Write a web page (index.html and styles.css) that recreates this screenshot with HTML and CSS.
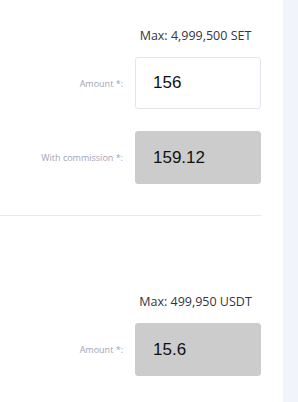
FILE: index.html
```html
<!DOCTYPE html>
<html>
<head>
    <title>Exchange</title>
    <link rel="stylesheet" href="styles.css">
</head>
<body>
    <div class="page">
        <div class="main">
            <div class="section">
                <div class="max-row">
                    <div class="max-text">Max: 4,999,500 SET</div>
                </div>
                <div class="field-row">
                    <label class="field-label">Amount *:</label>
                    <div class="field-box">156</div>
                </div>
                <div class="field-row">
                    <label class="field-label">With commission *:</label>
                    <div class="field-box disabled">159.12</div>
                </div>
            </div>

            <hr class="divider">

            <div class="section second">
                <div class="max-row">
                    <div class="max-text">Max: 499,950 USDT</div>
                </div>
                <div class="field-row">
                    <label class="field-label">Amount *:</label>
                    <div class="field-box disabled">15.6</div>
                </div>
            </div>
        </div>
        <div class="side"></div>
    </div>
</body>
</html>
```

FILE: styles.css
```css
body {
    margin: 0;
    font-family: "Open Sans", "Noto Sans", sans-serif;
    background: #fff;
}

.page {
    display: flex;
    height: 402px;
    overflow: hidden;
}

.main {
    width: 261px;
    padding-right: 22px;
}

.side {
    flex: 1;
    background-color: #f1f4fa;
}

.section {
    padding-top: 28px;
}

.section.second {
    padding-top: 78px;
}

.max-row {
    display: flex;
    justify-content: flex-end;
    margin-bottom: 13px;
}

.max-text {
    width: 126px;
    text-align: center;
    font-size: 12.5px;
    line-height: 16px;
    color: #353542;
    padding-right: 5px;
    box-sizing: border-box;
}

.field-row {
    display: flex;
    align-items: center;
    justify-content: flex-end;
    gap: 12px;
    margin-bottom: 22px;
}

.field-row:last-child {
    margin-bottom: 0;
}

.field-label {
    font-size: 9px;
    color: #a3a3b6;
}

.field-box {
    width: 126px;
    height: 52px;
    box-sizing: border-box;
    border: 1px solid #e2e5ee;
    border-radius: 3px;
    background: #fff;
    padding-left: 17px;
    display: flex;
    align-items: center;
    font-family: "Liberation Sans", Arial, sans-serif;
    font-size: 17px;
    color: #111;
}

.field-box.disabled {
    background: #cccccc;
    border-color: #cccccc;
    height: 53px;
}

.divider {
    border: none;
    border-top: 1px solid #e8e9f1;
    margin: 31px 0 0 0;
}
```
